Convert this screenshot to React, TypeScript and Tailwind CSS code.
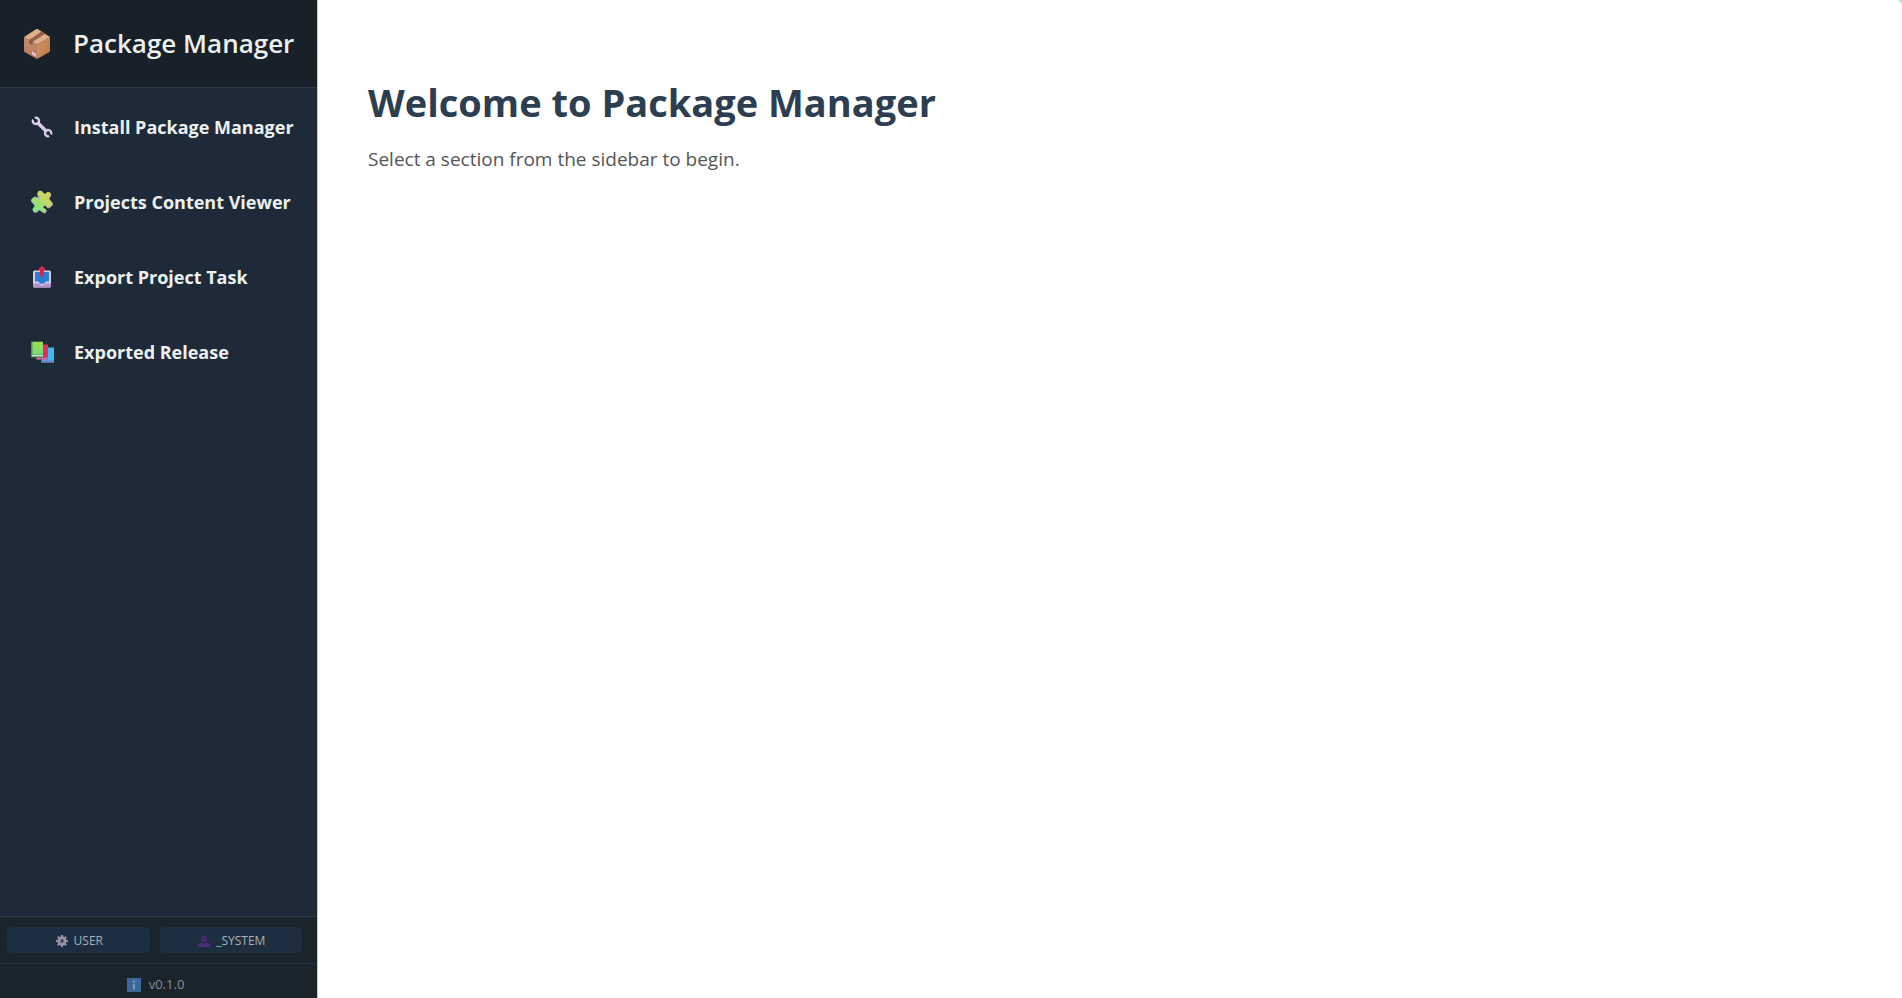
import type { ReactNode } from "react";

function PackageIcon() {
  return (
    <svg viewBox="0 0 28 32" className="h-8 w-7 shrink-0" aria-hidden="true">
      <defs>
        <linearGradient id="boxRight" x1="0" y1="0" x2="1" y2="1">
          <stop offset="0" stopColor="#d39a70" />
          <stop offset="1" stopColor="#bd733a" />
        </linearGradient>
        <linearGradient id="boxLeft" x1="0" y1="0" x2="0" y2="1">
          <stop offset="0" stopColor="#c58d6b" />
          <stop offset="1" stopColor="#b87762" />
        </linearGradient>
      </defs>
      <path d="M1 9 14 16.5V31L2 24.2Q1 23.6 1 22.5Z" fill="url(#boxLeft)" />
      <path d="M27 9 14 16.5V31L26 24.2Q27 23.6 27 22.5Z" fill="url(#boxRight)" />
      <path d="M14 1Q14.500 1 15 1.300L27 9 14 16.500 1 9 13 1.300Q13.500 1 14 1Z" fill="#deb086" />
      <path d="M18.500 3.600 22 5.800 9.500 13.900 6 11.900Z" fill="#965f4c" />
      <path d="M6 11.900 9.500 13.900V17.300L6 15.300Z" fill="#87594a" />
      <path d="M9 23.500 13 25.700V28.800L9 26.500Z" fill="#dfc5dc" />
    </svg>
  );
}

function WrenchIcon() {
  return (
    <svg viewBox="0 0 24 24" className="h-6 w-6 shrink-0" aria-hidden="true">
      <defs>
        <linearGradient id="wrench" gradientUnits="userSpaceOnUse" x1="2" y1="2" x2="22" y2="22">
          <stop offset="0" stopColor="#dddbe0" />
          <stop offset=".5" stopColor="#dac8ee" />
          <stop offset="1" stopColor="#d9d3de" />
        </linearGradient>
      </defs>
      <g fill="none" stroke="url(#wrench)">
        <path d="M7.200 7.200 16.800 16.800" strokeWidth="3.400" />
        <path d="M4.600 3.100A3.100 3.100 0 1 1 3.100 4.600" transform="rotate(4 5.800 5.800)" strokeWidth="2.400" />
        <path d="M19.400 20.900A3.100 3.100 0 1 1 20.900 19.400" transform="rotate(4 18.200 18.200)" strokeWidth="2.400" />
      </g>
      <path d="M1 1 6 6M23 23 18 18" stroke="#1f2a38" strokeWidth="2.400" strokeLinecap="round" />
    </svg>
  );
}

function PuzzleIcon() {
  return (
    <svg viewBox="0 0 24 24" className="h-6 w-6 shrink-0" aria-hidden="true">
      <defs>
        <linearGradient id="puzzle" x1="1" y1="0" x2="0" y2="1">
          <stop offset="0" stopColor="#e5cf52" />
          <stop offset=".5" stopColor="#b0db6d" />
          <stop offset="1" stopColor="#67ec9d" />
        </linearGradient>
      </defs>
      <path
        fill="#bda1c9"
        d="M8 6.500C6.700 3.700 8 1.500 10.300 1.400 12.500 1.500 13.200 3.300 14.800 4.500 16 4.900 16.600 2.700 18.700 2.600 21 2.700 22 5.500 20.500 7 19.400 8 19.200 8.500 19.600 9.600L23.200 14C22.500 15.500 20.500 18 18.500 18.400 17 18.700 16.700 16 14.900 15.800 13.100 16 13.100 18 14.500 18.800 16.700 19.600 17.500 21 16 22.500L14.200 23.500 9.300 20.200C8.100 21 7.500 22.800 5.300 22.700 3 22.500 2.500 20.200 3.700 18.500L5 16.200 1.200 11.300Z"
      />
      <path
        fill="url(#puzzle)"
        d="M7.800 5.300C6.700 2.700 8 .800 10.300 .800 12.400 .900 12.800 2.700 14.300 3.700 15.900 4.200 16.200 2.100 18.300 2 20.800 2.100 21.600 4.800 20 6.300 18.900 7.200 18.700 7.900 19.100 9L22.600 13.200C22 14.700 20 17.200 18 17.600 16.400 17.900 16.100 15.300 14.400 15.100 12.400 15.200 12.400 17.300 13.900 18.100 16 19 16.800 20.400 15.400 22L13.600 22.700 9 19.200C7.600 19.800 7.200 22 5 21.900 2.600 21.800 1.900 19.500 3.200 17.800 4.300 16.700 4.800 16.200 4.500 15L.900 10.500C1.500 9 3 7 5 6.500 6.700 6.300 6.600 9.300 8.500 9.400 10.400 9.200 10.700 7.200 9.400 6.500Z"
      />
    </svg>
  );
}

function OutboxIcon() {
  return (
    <svg viewBox="0 0 24 24" className="h-6 w-6 shrink-0" aria-hidden="true">
      <rect x="3" y="5.500" width="18" height="17" rx="1.600" fill="#d9cfe4" />
      <path d="M3 18.500H9L10.500 20.300H13.500L15 18.500H21V21Q21 22.500 19.500 22.500H4.500Q3 22.500 3 21Z" fill="#ae94cb" />
      <path d="M6 7H18Q19 7 19 8V16.500H15.700L14 18.800H10L8.300 16.500H5V8Q5 7 6 7Z" fill="#2680d5" />
      <path d="M12 .500 16 5H14V11.500H10V5H8Z" fill="#dd2451" />
    </svg>
  );
}

function BooksIcon() {
  return (
    <svg viewBox="0 0 24 24" className="h-6 w-6 shrink-0" aria-hidden="true">
      <defs>
        <linearGradient id="greenBook" x1="0" y1="0" x2="0" y2="1">
          <stop offset="0" stopColor="#9fdd50" />
          <stop offset="1" stopColor="#79d77e" />
        </linearGradient>
      </defs>
      <path d="M12 7.500H24V22.500H11V20.500H12Z" fill="#3bb9f3" />
      <path d="M11 20.500H24V22.500H12Q11 22.500 11 21.500Z" fill="#7480c3" />
      <path d="M7 4.500H18V19.500H7Z" fill="#e62b5d" />
      <path d="M6 17.500H18V19.500H7.500Q6 19.500 6 18.500Z" fill="#bc70a8" />
      <rect x="1" y="1.500" width="12" height="16" rx=".7" fill="#4d9a55" />
      <path d="M2.500 2H13V14.500H2.500Z" fill="url(#greenBook)" />
      <path d="M2 15H13V16.200H2Z" fill="#d9e4e4" />
    </svg>
  );
}

function GearIcon() {
  return (
    <svg viewBox="0 0 12 12" className="h-3 w-3 shrink-0" aria-hidden="true">
      <g fill="#9990a8">
        <circle cx="6" cy="6" r="4.500" />
        <path d="M5 0H7L7.300 2.500H4.700ZM5 12H7L7.300 9.500H4.700ZM0 5V7L2.500 7.300V4.700ZM12 5V7L9.500 7.300V4.700ZM1.050 2.450 2.450 1.050 4.300 2.700 2.700 4.300ZM9.550 1.050 10.950 2.450 9.300 4.300 7.700 2.700ZM1.050 9.550 2.450 10.950 4.300 9.300 2.700 7.700ZM10.950 9.550 9.550 10.950 7.700 9.300 9.300 7.700Z" />
      </g>
      <circle cx="6" cy="6" r="1.700" fill="#3d4354" />
    </svg>
  );
}

function PersonIcon() {
  return (
    <svg viewBox="0 0 12 12" className="h-3 w-3 shrink-0" aria-hidden="true">
      <path d="M0 12V10.500Q0 8 3 8H9Q12 8 12 10.500V12Z" fill="#49307a" />
      <path d="M4.500 6H7.500V9Q6 10 4.500 9Z" fill="#3a2463" />
      <ellipse cx="6" cy="3.700" rx="3" ry="3.700" fill="#44286c" />
    </svg>
  );
}

function InfoIcon() {
  return (
    <svg viewBox="0 0 14 14" className="h-3.5 w-3.5 shrink-0" aria-hidden="true">
      <rect width="14" height="14" fill="#3b6898" />
      <path d="M6 2.500H8V4.500H6ZM6 5.800H8V11.500H6Z" fill="#8197b3" />
    </svg>
  );
}

const sections: { label: string; icon: ReactNode }[] = [
  { label: "Install Package Manager", icon: <WrenchIcon /> },
  { label: "Projects Content Viewer", icon: <PuzzleIcon /> },
  { label: "Export Project Task", icon: <OutboxIcon /> },
  { label: "Exported Release", icon: <BooksIcon /> },
];

const accounts: { label: string; icon: ReactNode }[] = [
  { label: "USER", icon: <GearIcon /> },
  { label: "_SYSTEM", icon: <PersonIcon /> },
];

export default function App() {
  return (
    <div className="flex min-h-screen bg-[#bfd8dc] font-['Open_Sans','Noto_Sans',sans-serif]">
      <aside className="flex w-[318px] shrink-0 flex-col border-r border-[#c4c8cf] bg-[#1f2a38]">
        <header className="flex h-22 items-center gap-[22px] border-b border-[#2c3a4a] bg-[#182129] pl-[23px]">
          <PackageIcon />
          <span className="whitespace-nowrap text-[26px] font-semibold text-[#ecf0f1]">Package Manager</span>
        </header>
        <nav className="flex flex-1 flex-col gap-6 pt-[13px]">
          {sections.map(({ label, icon }) => (
            <button
              key={label}
              type="button"
              className="flex h-[51px] items-center gap-5 whitespace-nowrap pl-[30px] text-left text-lg font-bold text-[#ecf0f1]"
            >
              {icon}
              {label}
            </button>
          ))}
        </nav>
        <footer className="border-t border-[#2c3a4c] bg-[#1a242d] text-[#a9b0b6]">
          <div className="flex gap-2.5 pt-2.5 pr-[15px] pb-2.5 pl-[7px]">
            {accounts.map(({ label, icon }) => (
              <button
                key={label}
                type="button"
                className="flex h-[26px] flex-1 items-center justify-center gap-1.5 rounded bg-[#1c2e3f] pt-px pl-0.5 text-xs"
              >
                {icon}
                {label}
              </button>
            ))}
          </div>
          <div className="flex h-[35px] items-center justify-center gap-2 border-t border-[#24313d] pt-2 pr-1.5 text-[13px] text-[#868d93]">
            <InfoIcon />
            v0.1.0
          </div>
        </footer>
      </aside>
      <main className="flex-1 rounded-tr-md bg-white px-[50px] pt-[75px]">
        <h1 className="text-[38px] leading-[54px] font-bold text-[#2c3e50]">Welcome to Package Manager</h1>
        <p className="mt-4 text-[19px] leading-7 text-[#555555]">Select a section from the sidebar to begin.</p>
      </main>
    </div>
  );
}
